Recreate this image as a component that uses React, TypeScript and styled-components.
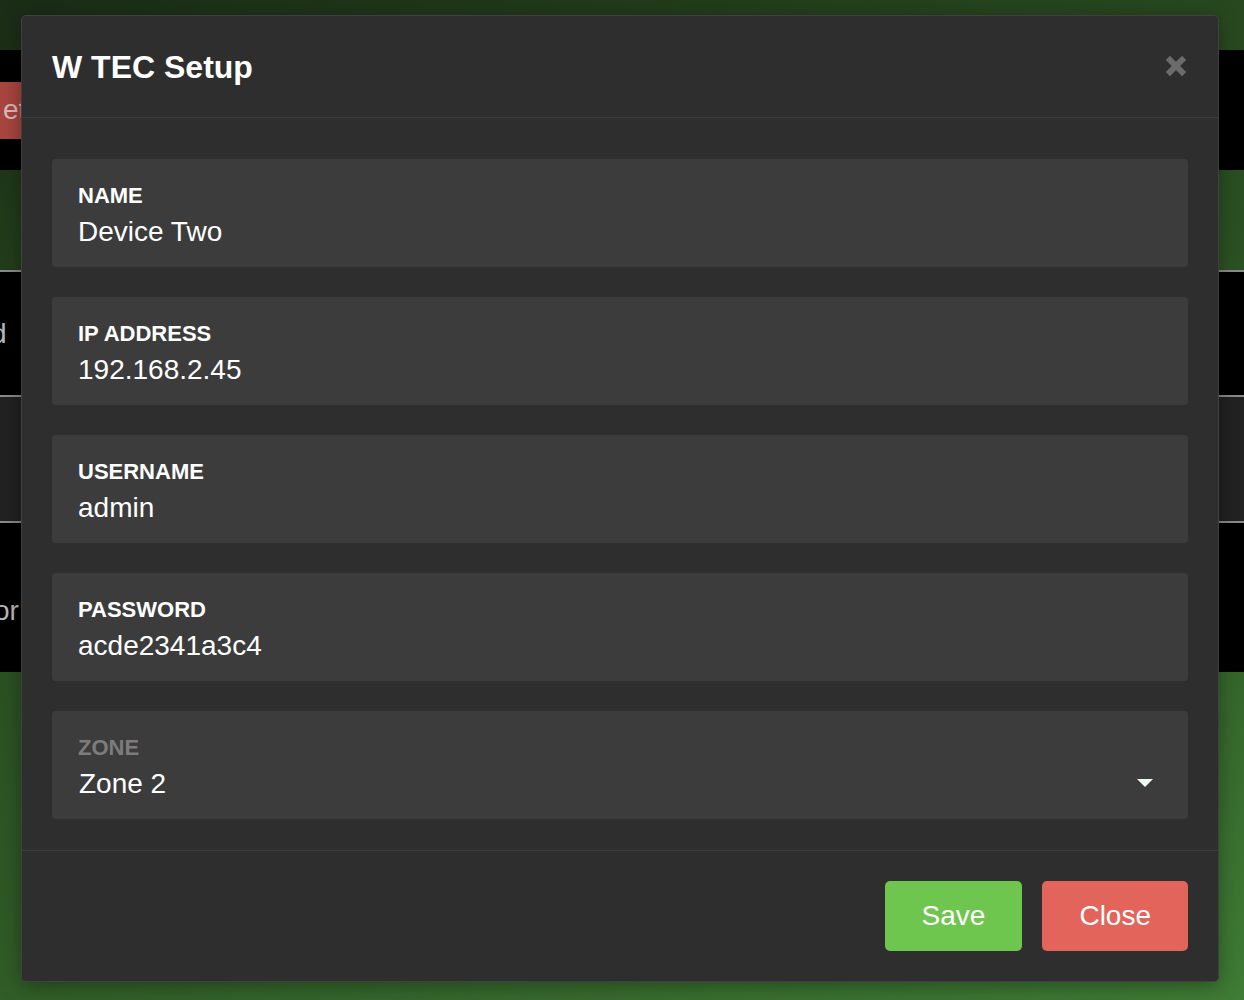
import styled, { createGlobalStyle } from "styled-components";

const GlobalStyle = createGlobalStyle`
  html, body {
    margin: 0;
    padding: 0;
  }
  body {
    font-family: "Liberation Sans", Arial, Helvetica, sans-serif;
    background: #000;
  }
  * {
    box-sizing: border-box;
  }
`;

const StPage = styled.div`
  position: relative;
  width: 1244px;
  height: 1000px;
  overflow: hidden;
  display: flex;
  flex-direction: column;
  background: linear-gradient(160deg, #1a2c15 0%, #27481f 30%, #2f5a26 65%, #3f7c35 100%);
`;

const StTopBar = styled.div`
  height: 50px;
`;

const StNav = styled.div`
  height: 120px;
  background: #000;
  display: flex;
  align-items: center;
`;

const StRedButton = styled.div`
  width: 60px;
  height: 57px;
  margin-left: -22px;
  background: #a9453f;
  color: #d9bcb9;
  font-size: 28px;
  display: flex;
  align-items: center;
  padding-left: 25px;
`;

const StGreenBand = styled.div`
  height: 100px;
`;

const StTable = styled.div`
  display: flex;
  flex-direction: column;
  border-top: 2px solid #8a8a8a;
`;

const StRow = styled.div<{ $bg: string; $h: number }>`
  height: ${({ $h }) => $h}px;
  background: ${({ $bg }) => $bg};
  border-bottom: 2px solid #8a8a8a;
  display: flex;
  align-items: center;
  color: #b8b8b8;
  font-size: 28px;

  &:last-child {
    border-bottom: none;
  }
`;

const StCellText = styled.span<{ $shift: number; $drop?: number }>`
  margin-left: ${({ $shift }) => $shift}px;
  margin-top: ${({ $drop }) => $drop ?? 0}px;
`;

const StModal = styled.div`
  position: absolute;
  left: 21px;
  top: 15px;
  width: 1198px;
  height: 967px;
  background: #2e2e2e;
  border: 1px solid #404040;
  border-radius: 5px;
  display: flex;
  flex-direction: column;
  box-shadow: 0 4px 20px rgba(0, 0, 0, 0.35);
`;

const StHeader = styled.header`
  display: flex;
  align-items: center;
  justify-content: space-between;
  padding: 33px 30px 32px;
  border-bottom: 1px solid #3b3b3b;
`;

const StTitle = styled.h1`
  margin: 0;
  font-size: 32px;
  line-height: 36px;
  font-weight: 700;
  color: #ffffff;
`;

const StCloseIcon = styled.button`
  border: none;
  background: none;
  padding: 0;
  margin-right: 1px;
  margin-top: -3px;
  width: 22px;
  height: 22px;
  display: flex;
  cursor: pointer;
`;

const StBody = styled.div`
  flex: 1;
  display: flex;
  flex-direction: column;
  gap: 30px;
  padding: 41px 30px 31px;
  border-bottom: 1px solid #3b3b3b;
`;

const StField = styled.div`
  height: 108px;
  background: #3c3c3c;
  border-radius: 4px;
  padding: 24px 26px 18px;
`;

const StLabel = styled.div<{ $muted?: boolean }>`
  font-size: 22px;
  line-height: 26px;
  font-weight: 700;
  color: ${({ $muted }) => ($muted ? "#7c7c7c" : "#ffffff")};
  margin-bottom: 6px;
`;

const StValue = styled.div<{ $indent?: number }>`
  display: flex;
  align-items: center;
  justify-content: space-between;
  font-size: 28px;
  line-height: 34px;
  color: #ffffff;
  padding-left: ${({ $indent }) => $indent ?? 0}px;
`;

const StCaret = styled.span`
  width: 0;
  height: 0;
  margin-right: 9px;
  margin-top: -3px;
  border-left: 8px solid transparent;
  border-right: 8px solid transparent;
  border-top: 8px solid #eafff0;
`;

const StFooter = styled.footer`
  display: flex;
  justify-content: flex-end;
  gap: 20px;
  padding: 30px 30px 30px;
`;

const StButton = styled.button<{ $color: string }>`
  height: 70px;
  padding: 0 37px;
  border: none;
  border-radius: 5px;
  background: ${({ $color }) => $color};
  color: #ffffff;
  font-family: "Liberation Sans", Arial, sans-serif;
  font-size: 28px;
  cursor: pointer;
`;

const fields = [
  { label: "NAME", value: "Device Two" },
  { label: "IP ADDRESS", value: "192.168.2.45" },
  { label: "USERNAME", value: "admin" },
  { label: "PASSWORD", value: "acde2341a3c4" },
];

const App = () => {
  return (
    <>
      <GlobalStyle />
      <StPage>
        <StTopBar />
        <StNav>
          <StRedButton>et</StRedButton>
        </StNav>
        <StGreenBand />
        <StTable>
          <StRow $bg="#000" $h={125}>
            <StCellText $shift={-9}>d</StCellText>
          </StRow>
          <StRow $bg="#222" $h={126} />
          <StRow $bg="#000" $h={149}>
            <StCellText $shift={-6} $drop={26}>or</StCellText>
          </StRow>
        </StTable>

        <StModal>
          <StHeader>
            <StTitle>W TEC Setup</StTitle>
            <StCloseIcon aria-label="close">
              <svg width="22" height="22" viewBox="0 0 22 22">
                <path
                  d="M5 5 L17 17 M17 5 L5 17"
                  stroke="#6b6b6b"
                  strokeWidth="6"
                  strokeLinecap="square"
                />
              </svg>
            </StCloseIcon>
          </StHeader>
          <StBody>
            {fields.map((f) => (
              <StField key={f.label}>
                <StLabel>{f.label}</StLabel>
                <StValue>{f.value}</StValue>
              </StField>
            ))}
            <StField>
              <StLabel $muted>ZONE</StLabel>
              <StValue $indent={1}>
                Zone 2
                <StCaret />
              </StValue>
            </StField>
          </StBody>
          <StFooter>
            <StButton $color="#6fc64e">Save</StButton>
            <StButton $color="#e2645a">Close</StButton>
          </StFooter>
        </StModal>
      </StPage>
    </>
  );
};

export default App;
